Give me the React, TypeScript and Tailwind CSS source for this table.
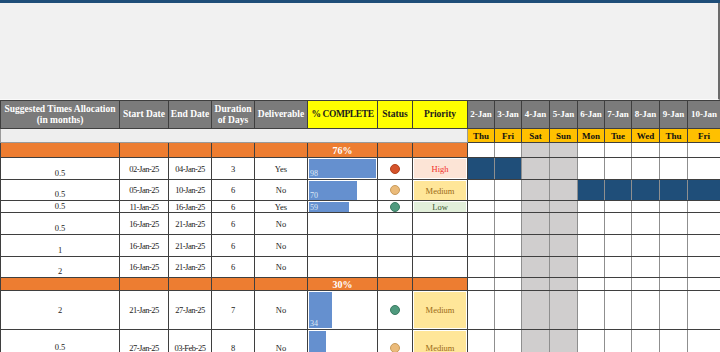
import React from "react";

const serif = "font-['Liberation_Serif','Times_New_Roman',serif]";

const days = [
  { d: "2-Jan", w: "Thu", we: false },
  { d: "3-Jan", w: "Fri", we: false },
  { d: "4-Jan", w: "Sat", we: true },
  { d: "5-Jan", w: "Sun", we: true },
  { d: "6-Jan", w: "Mon", we: false },
  { d: "7-Jan", w: "Tue", we: false },
  { d: "8-Jan", w: "Wed", we: false },
  { d: "9-Jan", w: "Thu", we: false },
  { d: "10-Jan", w: "Fri", we: false },
];

const colW = [
  "w-[119px]",
  "w-[49px]",
  "w-[43px]",
  "w-[43px]",
  "w-[53px]",
  "w-[70px]",
  "w-[35px]",
  "w-[55px]",
  "w-[27px]",
  "w-[27px]",
  "w-[28px]",
  "w-[28px]",
  "w-[27px]",
  "w-[27px]",
  "w-[28px]",
  "w-[28px]",
  "w-[33px]",
];

type Row = {
  h: string;
  bh: string;
  a: string;
  va: string;
  s: string;
  e: string;
  d: string;
  dl: string;
  p?: number;
  st?: "red" | "tan" | "green";
  pr?: "High" | "Medium" | "Low";
  fill: number[];
};

const group1: Row[] = [
  { h: "h-[22px]", bh: "h-[19px]", a: "0.5", va: "align-bottom", s: "02-Jan-25", e: "04-Jan-25", d: "3", dl: "Yes", p: 98, st: "red", pr: "High", fill: [0, 1] },
  { h: "h-[21px]", bh: "h-[19px]", a: "0.5", va: "align-bottom", s: "05-Jan-25", e: "10-Jan-25", d: "6", dl: "No", p: 70, st: "tan", pr: "Medium", fill: [4, 5, 6, 7, 8] },
  { h: "h-[12px]", bh: "h-[10px]", a: "0.5", va: "align-middle", s: "11-Jan-25", e: "16-Jan-25", d: "6", dl: "Yes", p: 59, st: "green", pr: "Low", fill: [] },
  { h: "h-[22px]", bh: "h-[19px]", a: "0.5", va: "align-bottom", s: "16-Jan-25", e: "21-Jan-25", d: "6", dl: "No", fill: [] },
  { h: "h-[22px]", bh: "h-[19px]", a: "1", va: "align-bottom", s: "16-Jan-25", e: "21-Jan-25", d: "6", dl: "No", fill: [] },
  { h: "h-[21px]", bh: "h-[19px]", a: "2", va: "align-bottom", s: "16-Jan-25", e: "21-Jan-25", d: "6", dl: "No", fill: [] },
];

const group2: Row[] = [
  { h: "h-[39px]", bh: "h-[36px]", a: "2", va: "align-middle", s: "21-Jan-25", e: "27-Jan-25", d: "7", dl: "No", p: 34, st: "green", pr: "Medium", fill: [] },
  { h: "h-[36px]", bh: "h-[34px]", a: "0.5", va: "align-middle", s: "27-Jan-25", e: "03-Feb-25", d: "8", dl: "No", p: 25, st: "tan", pr: "Medium", fill: [] },
];

const statusCls: Record<string, string> = {
  red: "bg-[#d6532b] border-[#b2421e]",
  tan: "bg-[#ebbb7a] border-[#c89b5c]",
  green: "bg-[#4f9a7e] border-[#3a7a61]",
};

const prioCls: Record<string, string> = {
  High: "bg-[#fce4d6] text-[#f2302b]",
  Medium: "bg-[#ffe699] text-[#9a6a16]",
  Low: "bg-[#e2efda] text-[#3d5a30]",
};

const cell = "border border-[#3f3f3f] p-0 text-center";
const gcell = "border border-y-[#3f3f3f] border-x-[#8f8f8f] p-0";

function GanttCells({ fill }: { fill: number[] }) {
  return (
    <>
      {days.map((day, i) => (
        <td
          key={i}
          className={`${gcell} ${
            fill.includes(i) ? "bg-[#1f4e79]" : day.we ? "bg-[#d0cece]" : "bg-white"
          }`}
        />
      ))}
    </>
  );
}

function DataRow({ r }: { r: Row }) {
  return (
    <tr className={r.h}>
      <td className={`${cell} ${r.va} text-[8.5px] leading-[11px] text-[#222]`}>{r.a}</td>
      <td className={`${cell} text-[8.5px] leading-[10px] tracking-[-0.5px] text-[#222]`}>{r.s}</td>
      <td className={`${cell} text-[8.5px] leading-[10px] tracking-[-0.5px] text-[#222]`}>{r.e}</td>
      <td className={`${cell} text-[8.5px] leading-[10px] text-[#222]`}>{r.d}</td>
      <td className={`${cell} text-[8.5px] leading-[10px] text-[#222]`}>{r.dl}</td>
      <td className={`${cell} align-top text-left`}>
        {r.p !== undefined && (
          <div
            className={`mt-[1px] ml-[1px] ${r.bh} bg-[#6590cf] flex items-end pl-[1px]`}
            style={{ width: Math.round(r.p * 0.68) }}
          >
            <span className="text-[8px] leading-[9px] text-[#dfe8f5]">{r.p}</span>
          </div>
        )}
      </td>
      <td className={`${cell} align-middle`}>
        {r.st && (
          <div className="flex items-center justify-center">
            <div className={`w-[10px] h-[10px] rounded-full border ${statusCls[r.st]}`} />
          </div>
        )}
      </td>
      <td className={`${cell} align-top`}>
        {r.pr && (
          <div
            className={`mx-[1px] mt-[1px] ${r.bh} flex items-center justify-center text-[8.5px] leading-[10px] ${prioCls[r.pr]}`}
          >
            {r.pr}
          </div>
        )}
      </td>
      <GanttCells fill={r.fill} />
    </tr>
  );
}

function OrangeRow({ h, label }: { h: string; label: string }) {
  return (
    <tr className={h}>
      {[0, 1, 2, 3, 4].map((i) => (
        <td key={i} className={`${cell} bg-[#ed7d31]`} />
      ))}
      <td className={`${cell} bg-[#ed7d31] text-white font-bold text-[10px] leading-[11px]`}>{label}</td>
      <td className={`${cell} bg-[#ed7d31]`} />
      <td className={`${cell} bg-[#ed7d31]`} />
      <GanttCells fill={[]} />
    </tr>
  );
}

export default function App() {
  const hd = `${cell} bg-[#7b7b7b] text-white font-bold text-[9.5px] leading-[11px] border-[#3a3a3a]`;
  const hy = `${cell} bg-[#ffff00] text-[#1c1c1c] font-bold text-[9.5px] leading-[11px] border-[#3a3a3a]`;
  return (
    <div className={`w-[720px] h-[352px] overflow-hidden bg-white ${serif}`}>
      <div className="h-[3px] bg-[#1f4e79]" />
      <div className="h-[97px] bg-[#f1f1f1] border-r-2 border-[#6b6b6b] border-b border-b-[#fafafa]" />
      <table className="table-fixed border-collapse w-[720px] text-[8px] leading-[9px]">
        <colgroup>
          {colW.map((w, i) => (
            <col key={i} className={w} />
          ))}
        </colgroup>
        <tbody>
          <tr className="h-[28px]">
            <td className={`${hd} whitespace-nowrap`}>
              Suggested Times Allocation
              <br />
              (in months)
            </td>
            <td className={hd}>Start Date</td>
            <td className={hd}>End Date</td>
            <td className={hd}>
              Duration
              <br />
              of Days
            </td>
            <td className={hd}>Deliverable</td>
            <td className={`${hy} tracking-[-0.4px]`}>% COMPLETE</td>
            <td className={hy}>Status</td>
            <td className={hy}>Priority</td>
            {days.map((d, i) => (
              <td key={i} className={`${hd} text-[9px] whitespace-nowrap`}>
                {d.d}
              </td>
            ))}
          </tr>
          <tr className="h-[14px]">
            <td colSpan={8} className="border border-[#9a9a9a] bg-[#eeeeee] p-0" />
            {days.map((d, i) => (
              <td
                key={i}
                className={`${cell} bg-[#ffc000] text-[#111] font-bold text-[9px] leading-[10px]`}
              >
                {d.w}
              </td>
            ))}
          </tr>
          <OrangeRow h="h-[15px]" label="76%" />
          {group1.map((r, i) => (
            <DataRow key={i} r={r} />
          ))}
          <OrangeRow h="h-[13px]" label="30%" />
          {group2.map((r, i) => (
            <DataRow key={i} r={r} />
          ))}
        </tbody>
      </table>
    </div>
  );
}
